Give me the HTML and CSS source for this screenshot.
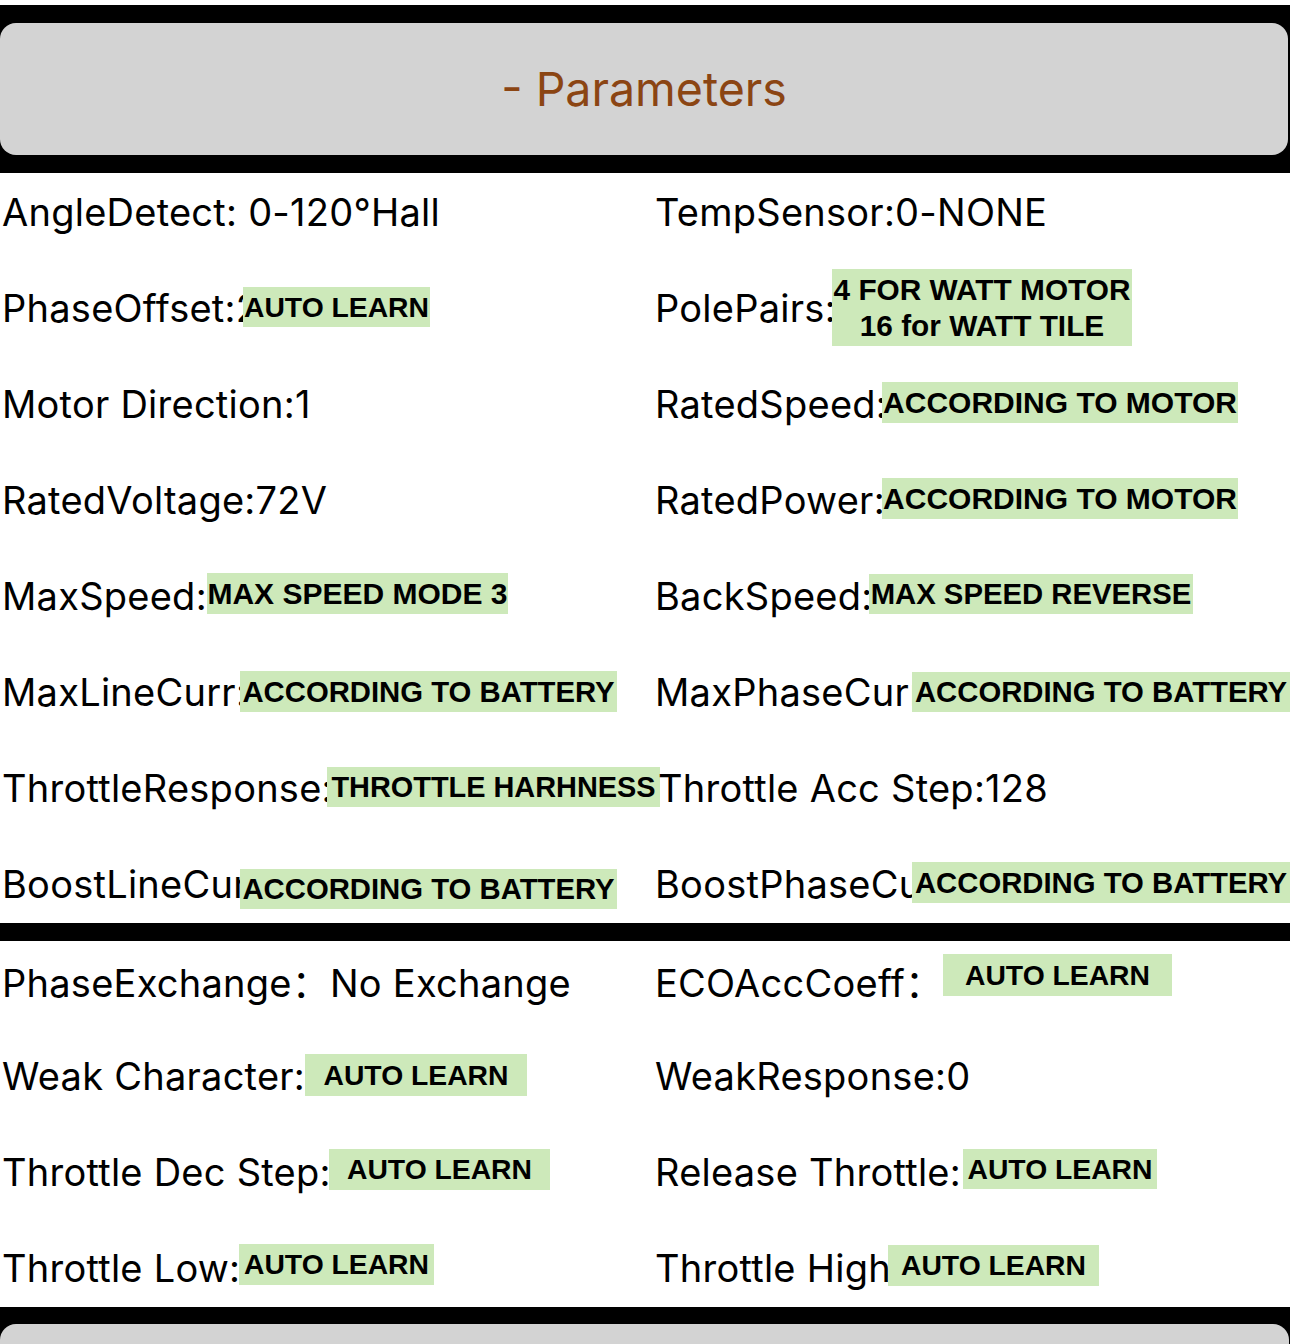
FILE: index.html
```html
<!DOCTYPE html>
<html lang="en">
<head>
    <meta charset="UTF-8">
    <meta name="viewport" content="width=device-width, initial-scale=1.0">
    <title>Parameters</title>
    <link rel="stylesheet" href="styles.css">
</head>
<body>
    <div class="top-bar">
        <div class="panel-title">- Parameters</div>
    </div>

    <section class="params">
        <div class="param">AngleDetect: 0-120°Hall</div>
        <div class="param">TempSensor:0-NONE</div>

        <div class="param">PhaseOffset:2<span class="tag tag-learn tag-phase-offset">AUTO LEARN</span></div>
        <div class="param">PolePairs:<span class="tag tag-pole-pairs">4 FOR WATT MOTOR<br>16 for WATT TILE</span></div>

        <div class="param">Motor Direction:1</div>
        <div class="param">RatedSpeed:<span class="tag tag-rated">ACCORDING TO MOTOR</span></div>

        <div class="param">RatedVoltage:72V</div>
        <div class="param">RatedPower:<span class="tag tag-rated">ACCORDING TO MOTOR</span></div>

        <div class="param">MaxSpeed:3<span class="tag tag-max-speed">MAX SPEED MODE 3</span></div>
        <div class="param">BackSpeed:<span class="tag tag-back-speed">MAX SPEED REVERSE</span></div>

        <div class="param">MaxLineCurr:<span class="tag tag-max-line">ACCORDING TO BATTERY</span></div>
        <div class="param">MaxPhaseCurr<span class="tag tag-max-phase">ACCORDING TO BATTERY</span></div>

        <div class="param">ThrottleResponse:<span class="tag tag-throttle-resp">THROTTLE HARHNESS</span></div>
        <div class="param param-shift">Throttle Acc Step:128</div>

        <div class="param">BoostLineCurr<span class="tag tag-boost-line">ACCORDING TO BATTERY</span></div>
        <div class="param">BoostPhaseCurr<span class="tag tag-boost-phase">ACCORDING TO BATTERY</span></div>
    </section>

    <div class="divider"></div>

    <section class="params">
        <div class="param">PhaseExchange：No Exchange</div>
        <div class="param">ECOAccCoeff：<span class="tag tag-learn tag-eco">AUTO LEARN</span></div>

        <div class="param">Weak Character:0<span class="tag tag-learn tag-weak-char">AUTO LEARN</span></div>
        <div class="param">WeakResponse:0</div>

        <div class="param">Throttle Dec Step:<span class="tag tag-learn tag-dec-step">AUTO LEARN</span></div>
        <div class="param">Release Throttle:<span class="tag tag-learn tag-release">AUTO LEARN</span></div>

        <div class="param">Throttle Low:<span class="tag tag-learn tag-low">AUTO LEARN</span></div>
        <div class="param">Throttle High<span class="tag tag-learn tag-high">AUTO LEARN</span></div>
    </section>

    <div class="bottom-bar">
        <div class="bottom-card"></div>
    </div>
</body>
</html>
```

FILE: styles.css
```css
body {
    margin: 0;
    font-family: Inter, "Noto Sans CJK SC", sans-serif;
    background-color: #ffffff;
    color: #000000;
    overflow: hidden;
}

.top-bar {
    margin-top: 5px;
    background-color: #000000;
    padding: 18px 2px 18px 0;
}

.panel-title {
    height: 132px;
    background-color: #d3d3d3;
    border-radius: 16px;
    display: flex;
    align-items: center;
    justify-content: center;
    color: #8b4513;
    font-size: 46.5px;
}

.params {
    display: grid;
    grid-template-columns: 653px 1fr;
    grid-auto-rows: 78px;
    row-gap: 18px;
}

.param {
    position: relative;
    display: flex;
    align-items: center;
    padding-left: 2px;
    font-size: 38px;
    letter-spacing: 0.25px;
    white-space: nowrap;
}

.param-shift {
    padding-left: 5px;
}

.divider {
    height: 18px;
    background-color: #000000;
}

.bottom-bar {
    background-color: #000000;
    padding: 17px 1px 0 0;
}

.bottom-card {
    height: 20px;
    background-color: #d3d3d3;
    border-radius: 16px 16px 0 0;
}

/* green notes stuck over the values */
.tag {
    position: absolute;
    height: 41px;
    display: flex;
    align-items: center;
    justify-content: center;
    background-color: #cde9ba;
    font-family: "Liberation Sans", Arial, sans-serif;
    font-weight: bold;
    font-size: 29.3px;
    letter-spacing: 0;
    text-align: center;
}

.tag-learn { font-size: 28.3px; }

.tag-phase-offset { left: 243px; top: 18px; width: 187px; height: 40px; }
.tag-pole-pairs { left: 179px; top: 0; width: 300px; height: 77px; line-height: 36px; font-size: 29.8px; }
.tag-rated { left: 229px; top: 17px; width: 356px; font-size: 30px; }
.tag-max-speed { left: 207px; top: 16px; width: 301px; font-size: 30px; }
.tag-back-speed { left: 216px; top: 17px; width: 324px; height: 40px; }
.tag-max-line { left: 240px; top: 18px; width: 377px; }
.tag-max-phase { left: 259px; top: 19px; width: 378px; height: 40px; }
.tag-throttle-resp { left: 327px; top: 18px; width: 333px; height: 40px; font-size: 28.9px; }
.tag-boost-line { left: 240px; top: 24px; width: 377px; height: 40px; }
.tag-boost-phase { left: 259px; top: 17px; width: 378px; }
.tag-eco { left: 290px; top: 13px; width: 229px; height: 42px; }
.tag-weak-char { left: 305px; top: 17px; width: 222px; height: 42px; }
.tag-dec-step { left: 329px; top: 16px; width: 221px; }
.tag-release { left: 310px; top: 16px; width: 194px; height: 40px; }
.tag-low { left: 239px; top: 15px; width: 195px; }
.tag-high { left: 235px; top: 16px; width: 211px; }
```
